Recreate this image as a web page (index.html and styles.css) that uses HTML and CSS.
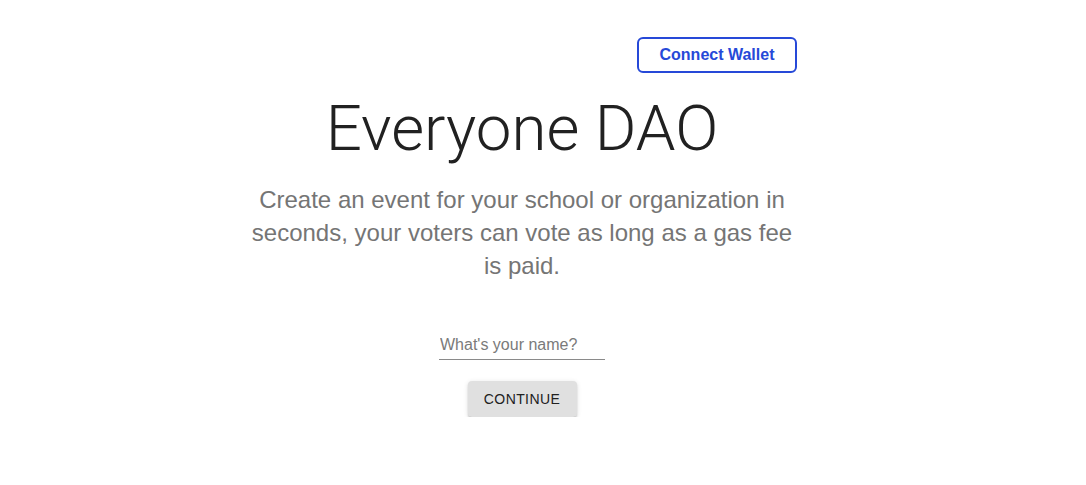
FILE: index.html
```html
<!DOCTYPE html>
<html lang="en">
<head>
<meta charset="utf-8">
<title>Everyone DAO</title>
<link rel="stylesheet" href="styles.css">
</head>
<body>
<main class="page">
  <header class="topbar">
    <button class="connect-btn">Connect Wallet</button>
  </header>
  <h1 class="title">Everyone DAO</h1>
  <p class="lead">Create an event for your school or organization in seconds, your voters can vote as long as a gas fee is paid.</p>
  <form class="name-form">
    <div class="field">
      <input class="field-input" type="text" placeholder="What's your name?">
    </div>
    <button type="button" class="continue-btn">Continue</button>
  </form>
</main>
</body>
</html>
```
FILE: styles.css
```css
html, body {
  margin: 0;
  padding: 0;
  background: #ffffff;
}

body {
  font-family: "Liberation Sans", Arial, sans-serif;
  color: #212121;
}

.page {
  width: 550px;
  margin-left: calc(50% - 296px);
  display: flex;
  flex-direction: column;
  align-items: center;
  padding-top: 37px;
}

.topbar {
  align-self: stretch;
  display: flex;
  justify-content: flex-end;
}

.connect-btn {
  box-sizing: border-box;
  width: 160px;
  height: 36px;
  border: 2px solid #2649d8;
  border-radius: 6px;
  background: #fff;
  color: #2649d8;
  font-family: "Liberation Sans", Arial, sans-serif;
  font-weight: 700;
  font-size: 16px;
  padding: 0;
}

.title {
  margin: 16px 0 0;
  font-family: Roboto, "Liberation Sans", Arial, sans-serif;
  font-weight: 300;
  font-size: 63.6px;
  line-height: 80px;
  color: #212121;
}

.lead {
  margin: 14px 0 0;
  text-align: center;
  font-size: 24px;
  line-height: 33px;
  color: #757575;
}

.name-form {
  margin-top: 49px;
  display: flex;
  flex-direction: column;
  align-items: center;
}

.field {
  width: 166px;
  border-bottom: 1px solid #8a8a8a;
  padding: 4px 0 5px;
}

.field-input {
  width: 100%;
  border: none;
  outline: none;
  padding: 0 0 0 1px;
  font-family: "Liberation Sans", Arial, sans-serif;
  font-size: 16px;
  line-height: 19px;
  color: #212121;
  background: transparent;
}

.field-input::placeholder {
  color: #7a7a7a;
}

.continue-btn {
  margin-top: 21px;
  width: 109px;
  height: 36px;
  border: none;
  border-radius: 4px;
  background: #e0e0e0;
  box-shadow: 0 3px 1px -2px rgba(0,0,0,0.2), 0 2px 2px 0 rgba(0,0,0,0.14), 0 1px 5px 0 rgba(0,0,0,0.12);
  font-family: "Liberation Sans", Arial, sans-serif;
  font-size: 14px;
  letter-spacing: 0.4px;
  text-transform: uppercase;
  color: #212121;
}
```
